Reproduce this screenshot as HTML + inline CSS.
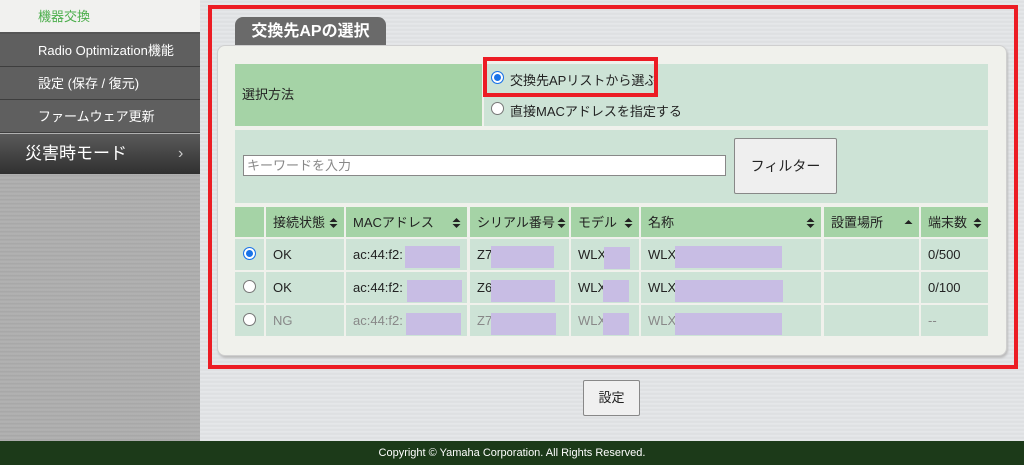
<!DOCTYPE html>
<html><head><meta charset="utf-8"><style>
*{box-sizing:border-box;margin:0;padding:0}
body{width:1024px;height:465px;overflow:hidden;position:relative;background:#e2e4e6;font-family:"Liberation Sans","Noto Sans CJK JP",sans-serif;font-size:13px;color:#222}
.a{position:absolute}
.side{left:0;top:0;width:200px;height:441px;background:repeating-linear-gradient(180deg,#a9a9a9 0,#b3b3b3 2px,#a4a4a4 4px)}
.mi{left:0;width:200px;height:33px;background:#5f5f5f;color:#fff;padding-left:38px;line-height:33px;border-bottom:1px solid #3e3e3e;font-size:13px}
.main{left:200px;top:0;width:824px;height:441px;background:repeating-linear-gradient(180deg,#e6e8ea 0,#dcdee0 2px,#e8eaec 4px)}
.cell{position:absolute;background:#cde3d6;line-height:31px;padding-left:7px}
.h{background:#a5d3a6}
.g{color:#888}
.blk{position:absolute;background:#c8bde4;height:22px}
.rad{position:absolute;width:13px;height:13px;border-radius:50%;border:1px solid #777;background:#fff}
.rad.on{border:1px solid #1a73e8;box-shadow:inset 0 0 0 2px #fff;background:#1a73e8}
.s{position:absolute;right:6px;top:11px;width:9px;height:10px}
</style></head><body>
<svg width="0" height="0" style="position:absolute"><defs>
<symbol id="ud" viewBox="0 0 9 10"><path d="M0.5 4 L4.5 0 L8.5 4Z M0.5 6 L4.5 10 L8.5 6Z" fill="#222"/></symbol>
<symbol id="u" viewBox="0 0 9 10"><path d="M0.5 6 L4.5 2 L8.5 6Z" fill="#222"/></symbol>
</defs></svg>
<div class="a side"></div>
<div class="a mi" style="top:0;height:34px;background:#f1f1ef;color:#4cae4c;line-height:34px;border-bottom:2px solid #555">機器交換</div>
<div class="a mi" style="top:34px">Radio Optimization機能</div>
<div class="a mi" style="top:67px">設定 (保存 / 復元)</div>
<div class="a mi" style="top:100px">ファームウェア更新</div>
<div class="a" style="left:0;top:134px;width:200px;height:40px;background:linear-gradient(#5a5a5a,#303030);color:#fff;font-size:17px;line-height:40px;padding-left:25px">災害時モード<span style="position:absolute;left:178px;color:#ccc;font-size:16px">›</span></div>
<div class="a main"></div>
<div class="a" style="left:208px;top:5px;width:810px;height:364px;border:4px solid #ec1c24"></div>
<div class="a" style="left:235px;top:17px;width:151px;height:30px;background:#6a6a6a;border-radius:8px 8px 0 0;color:#fff;font-weight:bold;font-size:16px;line-height:30px;text-align:center">交換先APの選択</div>
<div class="a" style="left:217px;top:45px;width:790px;height:311px;background:#f0f1ec;border:1px solid #cfcfcf;border-radius:8px;box-shadow:1px 2px 2px #bbb"></div>
<div class="cell h" style="left:235px;top:64px;width:247px;height:62px;line-height:62px">選択方法</div>
<div class="cell" style="left:484px;top:64px;width:504px;height:62px"></div>
<div class="rad on" style="left:491px;top:71px"></div>
<div class="a" style="left:510px;top:70px">交換先APリストから選ぶ</div>
<div class="rad" style="left:491px;top:102px"></div>
<div class="a" style="left:510px;top:101px">直接MACアドレスを指定する</div>
<div class="a" style="left:483px;top:57px;width:175px;height:40px;border:4px solid #ec1c24"></div>
<div class="cell" style="left:235px;top:130px;width:753px;height:73px"></div>
<div class="a" style="left:243px;top:155px;width:483px;height:21px;background:#fff;border:1px solid #888;color:#888;padding-left:3px;line-height:19px">キーワードを入力</div>
<div class="a" style="left:734px;top:138px;width:103px;height:56px;background:#efefef;border:1px solid #888;border-radius:2px;text-align:center;line-height:54px;font-size:14px">フィルター</div>
<div class="cell h" style="left:235px;top:207px;width:29px;height:30px"></div>
<div class="cell h" style="left:266px;top:207px;width:78px;height:30px">接続状態<svg class="s"><use href="#ud"/></svg></div>
<div class="cell h" style="left:346px;top:207px;width:121px;height:30px">MACアドレス<svg class="s"><use href="#ud"/></svg></div>
<div class="cell h" style="left:470px;top:207px;width:99px;height:30px">シリアル番号<svg class="s" style="right:3px"><use href="#ud"/></svg></div>
<div class="cell h" style="left:571px;top:207px;width:68px;height:30px">モデル<svg class="s"><use href="#ud"/></svg></div>
<div class="cell h" style="left:641px;top:207px;width:180px;height:30px">名称<svg class="s"><use href="#ud"/></svg></div>
<div class="cell h" style="left:824px;top:207px;width:95px;height:30px">設置場所<svg class="s"><use href="#u"/></svg></div>
<div class="cell h" style="left:921px;top:207px;width:67px;height:30px">端末数<svg class="s"><use href="#ud"/></svg></div>
<div class="cell" style="left:235px;top:239px;width:29px;height:31px"></div>
<div class="cell" style="left:266px;top:239px;width:78px;height:31px">OK</div>
<div class="cell" style="left:346px;top:239px;width:121px;height:31px">ac:44:f2:</div>
<div class="cell" style="left:470px;top:239px;width:99px;height:31px">Z7</div>
<div class="cell" style="left:571px;top:239px;width:68px;height:31px">WLX</div>
<div class="cell" style="left:641px;top:239px;width:180px;height:31px">WLX</div>
<div class="cell" style="left:824px;top:239px;width:95px;height:31px"></div>
<div class="cell" style="left:921px;top:239px;width:67px;height:31px">0/500</div>
<div class="cell" style="left:235px;top:272px;width:29px;height:31px"></div>
<div class="cell" style="left:266px;top:272px;width:78px;height:31px">OK</div>
<div class="cell" style="left:346px;top:272px;width:121px;height:31px">ac:44:f2:</div>
<div class="cell" style="left:470px;top:272px;width:99px;height:31px">Z6</div>
<div class="cell" style="left:571px;top:272px;width:68px;height:31px">WLX</div>
<div class="cell" style="left:641px;top:272px;width:180px;height:31px">WLX</div>
<div class="cell" style="left:824px;top:272px;width:95px;height:31px"></div>
<div class="cell" style="left:921px;top:272px;width:67px;height:31px">0/100</div>
<div class="cell" style="left:235px;top:305px;width:29px;height:31px"></div>
<div class="cell g" style="left:266px;top:305px;width:78px;height:31px">NG</div>
<div class="cell g" style="left:346px;top:305px;width:121px;height:31px">ac:44:f2:</div>
<div class="cell g" style="left:470px;top:305px;width:99px;height:31px">Z7</div>
<div class="cell g" style="left:571px;top:305px;width:68px;height:31px">WLX</div>
<div class="cell g" style="left:641px;top:305px;width:180px;height:31px">WLX</div>
<div class="cell" style="left:824px;top:305px;width:95px;height:31px"></div>
<div class="cell g" style="left:921px;top:305px;width:67px;height:31px">--</div>
<div class="rad on" style="left:243px;top:247px"></div>
<div class="rad" style="left:243px;top:280px"></div>
<div class="rad" style="left:243px;top:313px"></div>
<div class="blk" style="left:405px;top:246px;width:55px"></div>
<div class="blk" style="left:407px;top:280px;width:55px"></div>
<div class="blk" style="left:406px;top:313px;width:55px"></div>
<div class="blk" style="left:491px;top:246px;width:63px"></div>
<div class="blk" style="left:491px;top:280px;width:64px"></div>
<div class="blk" style="left:491px;top:313px;width:65px"></div>
<div class="blk" style="left:604px;top:247px;width:26px"></div>
<div class="blk" style="left:603px;top:280px;width:26px"></div>
<div class="blk" style="left:603px;top:313px;width:26px"></div>
<div class="blk" style="left:675px;top:246px;width:107px"></div>
<div class="blk" style="left:675px;top:280px;width:108px"></div>
<div class="blk" style="left:675px;top:313px;width:107px"></div>
<div class="a" style="left:583px;top:380px;width:57px;height:36px;background:#f0f0f0;border:1px solid #888;border-radius:2px;text-align:center;line-height:34px">設定</div>
<div class="a" style="left:0;top:441px;width:1024px;height:24px;background:#1c3a19;color:#fff;font-size:11px;text-align:center;line-height:24px">Copyright © Yamaha Corporation. All Rights Reserved.</div>
</body></html>
